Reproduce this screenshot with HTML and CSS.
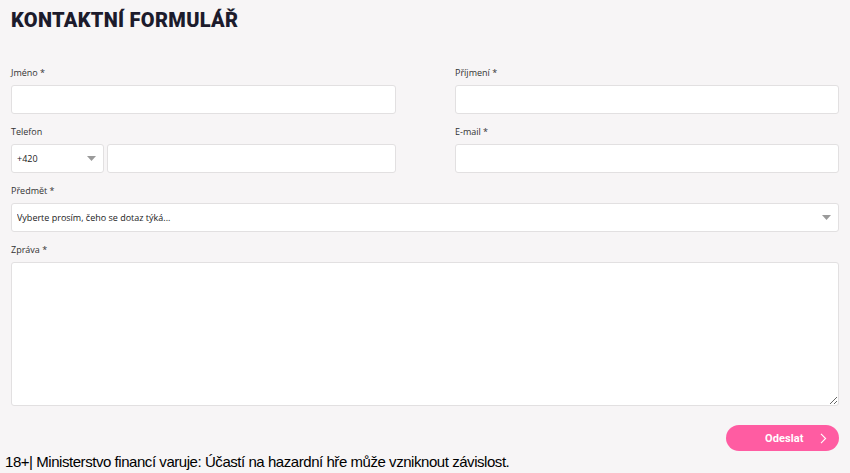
FILE: index.html
```html
<!DOCTYPE html>
<html lang="cs">
<head>
<meta charset="utf-8">
<title>Kontaktní formulář</title>
<link rel="stylesheet" href="styles.css">
</head>
<body>
<main class="page">
  <h1 class="title">KONTAKTNÍ FORMULÁŘ</h1>
  <form class="form">
    <div class="grid">
      <div class="field">
        <label class="label">Jméno *</label>
        <input class="input" type="text">
      </div>
      <div class="field">
        <label class="label">Příjmení *</label>
        <input class="input" type="text">
      </div>
      <div class="field">
        <label class="label">Telefon</label>
        <div class="phone">
          <div class="select-wrap prefix">
            <select class="select"><option>+420</option></select>
            <svg class="arrow" width="9" height="5" viewBox="0 0 9 5"><path d="M0 0h9L4.5 5z" fill="#9a9a9a"/></svg>
          </div>
          <input class="input" type="tel">
        </div>
      </div>
      <div class="field">
        <label class="label">E-mail *</label>
        <input class="input" type="email">
      </div>
    </div>
    <div class="field">
      <label class="label">Předmět *</label>
      <div class="select-wrap">
        <select class="select"><option>Vyberte prosím, čeho se dotaz týká...</option></select>
        <svg class="arrow" width="9" height="5" viewBox="0 0 9 5"><path d="M0 0h9L4.5 5z" fill="#9a9a9a"/></svg>
      </div>
    </div>
    <div class="field">
      <label class="label">Zpráva *</label>
      <textarea class="textarea"></textarea>
    </div>
    <div class="actions">
      <button class="btn" type="button">
        <span class="btn-text">Odeslat</span>
        <svg class="chev" width="7" height="11" viewBox="0 0 7 11"><path d="M1 0.8L5.6 5.5L1 10.2" fill="none" stroke="#fff" stroke-width="1.1"/></svg>
      </button>
    </div>
  </form>
</main>
<p class="warning">18+| Ministerstvo financí varuje: Účastí na hazardní hře může vzniknout závislost.</p>
</body>
</html>
```

FILE: styles.css
```css
html, body {
  margin: 0;
  padding: 0;
  background: #f7f5f6;
}

.page {
  width: 828px;
  padding: 8px 0 0 11px;
}

.title {
  margin: 0 0 34px;
  font-family: Roboto, "DejaVu Sans", sans-serif;
  font-weight: 900;
  font-size: 20px;
  line-height: 24px;
  letter-spacing: 0.3px;
  color: #1c1b2c;
}

.form {
  display: flex;
  flex-direction: column;
}

.grid {
  display: grid;
  grid-template-columns: 385px 384px;
  column-gap: 59px;
}

.field {
  display: flex;
  flex-direction: column;
  margin-bottom: 11px;
}

.label {
  font-family: "Open Sans", sans-serif;
  font-size: 9px;
  line-height: 13px;
  color: #333;
  margin-bottom: 6px;
}

.input, .select, .textarea {
  box-sizing: border-box;
  border: 1px solid #e2e0e1;
  border-radius: 3px;
  background: #fff;
  font-family: "Open Sans", sans-serif;
  font-size: 9px;
  color: #222;
  outline: none;
  margin: 0;
}

.input {
  height: 29px;
  width: 100%;
  padding: 0 6px;
}

.phone {
  display: flex;
  gap: 3px;
}

.phone .input {
  flex: 1;
}

.select-wrap {
  position: relative;
  display: flex;
}

.select-wrap.prefix {
  width: 93px;
  flex: none;
}

.select {
  appearance: none;
  -webkit-appearance: none;
  width: 100%;
  height: 29px;
  padding: 0 5px;
}

.arrow {
  position: absolute;
  right: 8px;
  top: 12px;
  pointer-events: none;
}

.textarea {
  height: 144px;
  width: 100%;
  resize: vertical;
}

.actions {
  display: flex;
  justify-content: flex-end;
  margin-top: 8px;
}

.btn {
  width: 113px;
  height: 26px;
  border: 0;
  border-radius: 13px;
  background: #ff5ca2;
  color: #fff;
  display: flex;
  align-items: center;
  padding: 0 12px 0 39px;
  box-sizing: border-box;
  cursor: pointer;
}

.btn-text {
  font-family: Roboto, sans-serif;
  font-weight: 700;
  font-size: 11px;
  letter-spacing: 0.1px;
  flex: 1;
  text-align: left;
}

.chev {
  flex: none;
}

.warning {
  margin: 0;
  padding: 2px 0 0 5px;
  font-family: "Liberation Sans", Arial, sans-serif;
  font-size: 15px;
  letter-spacing: -0.45px;
  line-height: 18px;
  color: #000;
}
```
